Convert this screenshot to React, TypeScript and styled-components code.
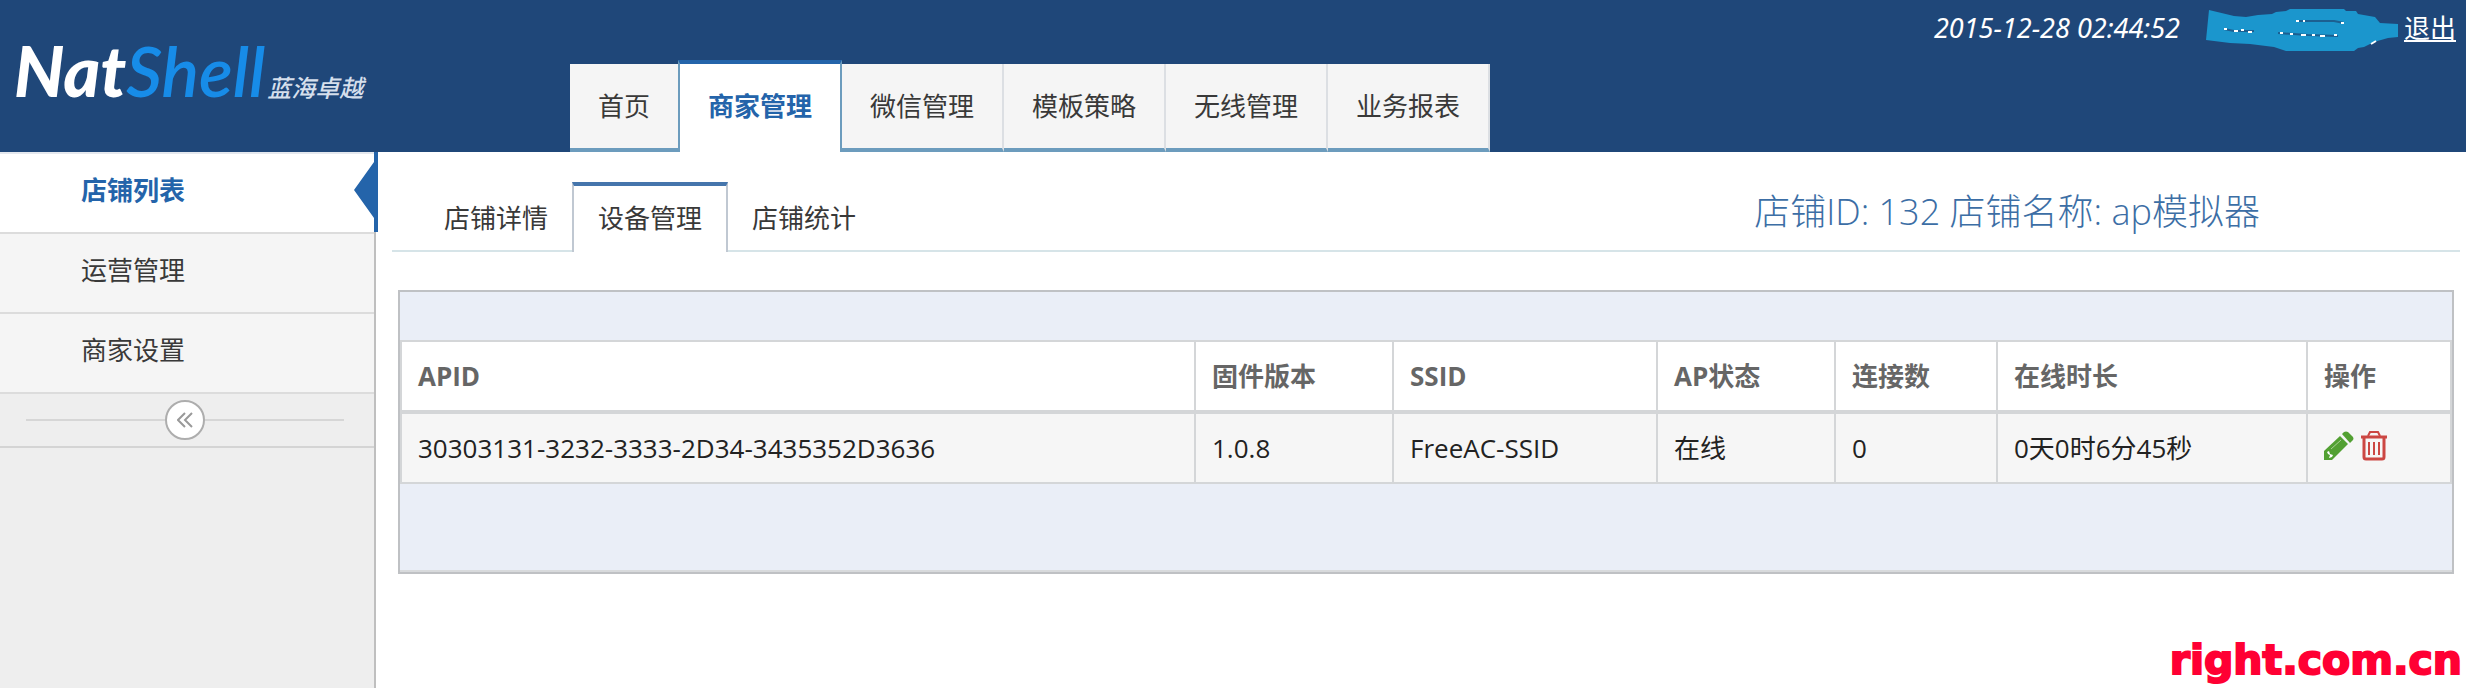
import React from "react";
import styled, { createGlobalStyle, css } from "styled-components";

const GlobalStyle = createGlobalStyle`
  *, *::before, *::after { box-sizing: border-box; }
  body {
    margin: 0;
    background: #fff;
    color: #393939;
    font-family: "Open Sans", "Noto Sans CJK SC", sans-serif;
    font-size: 26px;
    line-height: 40px;
  }
  a { color: inherit; text-decoration: none; }
  ul { list-style: none; margin: 0; padding: 0; }
`;

const Page = styled.div`
  display: flex;
  flex-direction: column;
  min-height: 100vh;
`;

const Header = styled.header`
  display: flex;
  align-items: stretch;
  height: 152px;
  background: #1f4779;
`;

const Brand = styled.a`
  display: flex;
  align-items: baseline;
  width: 570px;
  padding: 30px 0 0 14px;
  font-family: Lato, "Noto Sans CJK SC", sans-serif;
  font-style: italic;
  font-size: 70px;
  line-height: 80px;
`;

const BrandNat = styled.span`
  color: #fff;
  font-weight: 900;
`;

const BrandShell = styled.span`
  color: #178ce8;
  font-weight: 600;
`;

const BrandSub = styled.small`
  margin-left: 2px;
  color: #d5dfec;
  font-size: 24px;
  font-weight: 500;
`;

const MainNav = styled.nav`
  display: flex;
  align-items: flex-end;
`;

const NavList = styled.ul`
  display: flex;
  align-items: flex-end;
`;

const NavLink = styled.a<{ $active?: boolean; $beforeActive?: boolean }>`
  display: block;
  height: 88px;
  padding: 22px 28px 0;
  background: #f5f5f5;
  border-right: 2px solid #dcdfe3;
  border-bottom: 4px solid #6c9cbd;
  ${(p) =>
    p.$beforeActive &&
    css`
      border-right: 0;
    `}
  ${(p) =>
    p.$active &&
    css`
      height: 92px;
      background: #fff;
      border: 0 solid #6c9cbd;
      border-width: 4px 2px 0;
      border-top-color: #2464aa;
      color: #2464aa;
      font-weight: 700;
    `}
`;

const Account = styled.div`
  display: flex;
  align-items: flex-start;
  margin-left: auto;
  padding: 8px 10px 0 0;
  color: #fff;
`;

const Clock = styled.time`
  font-family: "Noto Sans", sans-serif;
  font-size: 27px;
  font-style: italic;
`;

const Scribble = styled.svg`
  margin: 0 6px 0 26px;
`;

const Logout = styled.a`
  text-decoration: underline;
`;

const Body = styled.div`
  display: flex;
  flex: 1;
`;

const Sidebar = styled.aside`
  width: 376px;
  flex: none;
  background: #eee;
  border-right: 2px solid #bfbfbf;
`;

const SideLink = styled.a<{ $active?: boolean }>`
  position: relative;
  display: block;
  height: 80px;
  padding: 16px 81px;
  background: #f5f5f5;
  border-bottom: 2px solid #dcdcdc;
  ${(p) =>
    p.$active &&
    css`
      height: 82px;
      background: #fff;
      border-top: 2px solid #e4e8ee;
      color: #2464aa;
      font-weight: 700;
    `}
`;

const ActiveMarker = styled.svg`
  position: absolute;
  right: -4px;
  top: -2px;
`;

const CollapseBar = styled.div`
  display: flex;
  align-items: center;
  justify-content: center;
  height: 54px;
  padding: 0 30px 0 26px;
  border-bottom: 2px solid #d4d4d4;
`;

const Rule = styled.span`
  flex: 1;
  height: 2px;
  background: #d6d6d6;
`;

const CollapseButton = styled.button`
  display: flex;
  align-items: center;
  justify-content: center;
  width: 40px;
  height: 40px;
  padding: 0;
  background: #fff;
  border: 2px solid #adadad;
  border-radius: 50%;
`;

const Content = styled.main`
  flex: 1;
  min-width: 0;
  padding-top: 30px;
`;

const TabBar = styled.div`
  display: flex;
  align-items: flex-end;
  justify-content: space-between;
  margin: 0 6px 0 16px;
  padding: 0 200px 0 28px;
  border-bottom: 2px solid #d6e4e8;
`;

const TabList = styled.ul`
  display: flex;
  align-items: flex-end;
`;

const SubTab = styled.a<{ $active?: boolean }>`
  display: block;
  padding: 16px 24px 12px;
  ${(p) =>
    p.$active &&
    css`
      margin-bottom: -2px;
      padding: 12px 24px 14px;
      background: #fff;
      border: 2px solid #c0c8d2;
      border-top: 4px solid #4575ac;
      border-bottom: 0;
    `}
`;

const StoreTitle = styled.h1`
  margin: 0;
  padding-bottom: 8px;
  color: #3c6ea5;
  font-size: 36px;
  font-weight: 300;
  line-height: 60px;
`;

const Panel = styled.section`
  margin: 38px 12px 0 22px;
  padding: 48px 0 88px;
  background: #eaeef7;
  border: 2px solid #bfc1c4;
  box-shadow: inset 0 -2px 0 #d8dadc;
`;

const DataTable = styled.table`
  width: 100%;
  border-collapse: collapse;
  table-layout: fixed;
`;

const HeadCell = styled.th<{ $width?: string }>`
  width: ${(p) => p.$width ?? "auto"};
  padding: 14px 16px;
  background: #fff;
  border: 2px solid #d4d6d8;
  border-bottom-width: 4px;
  color: #666;
  font-weight: 700;
  text-align: left;
`;

const Cell = styled.td`
  padding: 14px 16px;
  background: #f6f6f6;
  border: 2px solid #d4d6d8;
  color: #222;
`;

const Actions = styled.div`
  display: flex;
  align-items: center;
  gap: 6px;
  height: 40px;
  padding-bottom: 4px;
`;

const IconButton = styled.button`
  display: flex;
  padding: 0;
  background: none;
  border: 0;
`;

const Watermark = styled.footer`
  margin: 66px 4px 0 0;
  color: #f03;
  font-family: "DejaVu Sans", sans-serif;
  font-size: 41px;
  font-weight: 700;
  line-height: 40px;
  text-align: right;
  -webkit-text-stroke: 2px #f03;
`;

const PencilIcon = () => (
  <svg width="30" height="30" viewBox="0 0 30 30" aria-hidden="true">
    <path d="M0 29V20L16 5l8 8L8 29z" fill="#52a032" />
    <path d="M18 3l2-2q2-1 4 0l5 5q1 2 0 3l-3 3z" fill="#52a032" />
    <path d="M7 18 17 9" stroke="#a9d096" strokeWidth="1" />
    <path d="M3 21l2-1 1 3 3 1-1 2-3 1 1-3-2-1z" fill="#fff" />
  </svg>
);

const TrashIcon = () => (
  <svg width="28" height="30" viewBox="0 0 28 30" fill="none" stroke="#cc4743" aria-hidden="true">
    <path d="M1 6h26" strokeWidth="3" />
    <path d="M8 5l2-4h8l2 4" strokeWidth="2" />
    <path d="M4 7v19q0 2 2 2h16q2 0 2-2V7" strokeWidth="3" />
    <path d="M9 11v13M14 11v13M19 11v13" strokeWidth="2" />
  </svg>
);

const NAV = ["首页", "商家管理", "微信管理", "模板策略", "无线管理", "业务报表"];
const SIDE = ["店铺列表", "运营管理", "商家设置"];
const TABS = ["店铺详情", "设备管理", "店铺统计"];

const COLUMNS: { label: string; width?: string }[] = [
  { label: "APID" },
  { label: "固件版本", width: "198px" },
  { label: "SSID", width: "264px" },
  { label: "AP状态", width: "178px" },
  { label: "连接数", width: "162px" },
  { label: "在线时长", width: "310px" },
  { label: "操作", width: "144px" },
];

const ROWS = [
  ["30303131-3232-3333-2D34-3435352D3636", "1.0.8", "FreeAC-SSID", "在线", "0", "0天0时6分45秒"],
];

export default function App() {
  return (
    <Page>
      <GlobalStyle />
      <Header>
        <Brand href="#">
          <BrandNat>Nat</BrandNat>
          <BrandShell>Shell</BrandShell>
          <BrandSub>蓝海卓越</BrandSub>
        </Brand>
        <MainNav>
          <NavList>
            {NAV.map((label, i) => (
              <li key={label}>
                <NavLink href="#" $active={i === 1} $beforeActive={i === 0}>
                  {label}
                </NavLink>
              </li>
            ))}
          </NavList>
        </MainNav>
        <Account>
          <Clock>2015-12-28 02:44:52</Clock>
          <Scribble width="192" height="44" viewBox="0 0 192 44" aria-hidden="true">
            <path
              d="M3 2 L28 8 L40 9 L52 7 L66 6 L70 4 L80 3 L84 1 L138 1 L140 3 L150 3 L152 6 L169 9 L174 15 L192 16 L192 29 L182 30 L168 34 L158 39 L152 40 L148 43 L80 43 L68 39 L44 36 L24 35 L0 32Z"
              fill="#1b96cd"
            />
            <g fill="none" strokeWidth="2">
              <path d="M18 21l10 2h20M72 25l30 2 30 1M90 13h38l10 2" stroke="#1c5f91" />
              <path
                d="M18 21h3M28 23h4M35 22h3M42 24h4M74 25h3M84 26h3M95 27h5M106 27h3M114 28h5M128 27h3M90 13h3M97 13h2M135 15h3M165 36l5-3"
                stroke="#fff"
              />
            </g>
          </Scribble>
          <Logout href="#">退出</Logout>
        </Account>
      </Header>
      <Body>
        <Sidebar>
          <ul>
            {SIDE.map((label, i) => (
              <li key={label}>
                <SideLink href="#" $active={i === 0}>
                  {label}
                  {i === 0 && (
                    <ActiveMarker width="24" height="80" viewBox="0 0 24 80" aria-hidden="true">
                      <path d="M20 0h4v80h-4V66L0 38 20 10z" fill="#2464aa" />
                    </ActiveMarker>
                  )}
                </SideLink>
              </li>
            ))}
          </ul>
          <CollapseBar>
            <Rule />
            <CollapseButton aria-label="收起">
              <svg width="16" height="16" viewBox="0 0 16 16" fill="none" stroke="#999" strokeWidth="2">
                <path d="M8 1 1 8l7 7M15 1 8 8l7 7" />
              </svg>
            </CollapseButton>
            <Rule />
          </CollapseBar>
        </Sidebar>
        <Content>
          <TabBar>
            <TabList>
              {TABS.map((label, i) => (
                <li key={label}>
                  <SubTab href="#" $active={i === 1}>
                    {label}
                  </SubTab>
                </li>
              ))}
            </TabList>
            <StoreTitle>店铺ID: 132 店铺名称: ap模拟器</StoreTitle>
          </TabBar>
          <Panel>
            <DataTable>
              <thead>
                <tr>
                  {COLUMNS.map((c) => (
                    <HeadCell key={c.label} scope="col" $width={c.width}>
                      {c.label}
                    </HeadCell>
                  ))}
                </tr>
              </thead>
              <tbody>
                {ROWS.map((row) => (
                  <tr key={row[0]}>
                    {row.map((value, i) => (
                      <Cell key={i}>{value}</Cell>
                    ))}
                    <Cell>
                      <Actions>
                        <IconButton aria-label="编辑">
                          <PencilIcon />
                        </IconButton>
                        <IconButton aria-label="删除">
                          <TrashIcon />
                        </IconButton>
                      </Actions>
                    </Cell>
                  </tr>
                ))}
              </tbody>
            </DataTable>
          </Panel>
          <Watermark>right.com.cn</Watermark>
        </Content>
      </Body>
    </Page>
  );
}
